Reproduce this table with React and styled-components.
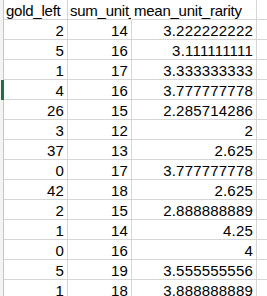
import styled, { createGlobalStyle } from "styled-components";

const GlobalStyle = createGlobalStyle`
  html, body {
    margin: 0;
    padding: 0;
    background: #fff;
  }
`

const Sheet = styled.div`
  width: 267px;
  height: 296px;
  overflow: hidden;
  background: #fff;
  font-family: "Liberation Sans Narrow", "Liberation Sans", Arial, sans-serif;
  font-size: 15px;
  color: #000;
`
const Row = styled.div`
  display: grid;
  grid-template-columns: 4px 64px 64px 125px 1fr;
  height: 20px;
`
const RowHead = styled.div`
  background: #f3f3f3;
  border-right: 1px solid ${p => (p.$active ? "#1e7145" : "#c6c6c6")};
  box-shadow: ${p => (p.$active ? "inset -2px 0 0 #1e7145" : "none")};
`
const Cell = styled.div`
  display: flex;
  align-items: flex-end;
  justify-content: ${p => (p.$text ? "flex-start" : "flex-end")};
  padding: 0 ${p => (p.$text ? "0" : "3px")} 1px ${p => (p.$text ? "2px" : "0")};
  border-right: 1px solid ${p => (p.$noRight ? "transparent" : "#d6d6d6")};
  border-bottom: 1px solid #d6d6d6;
  line-height: 15px;
  letter-spacing: ${p => (p.$text ? "-0.25px" : "0.2px")};
  white-space: nowrap;
  overflow: hidden;
`
const Empty = styled.div`
  border-bottom: 1px solid #d6d6d6;
`

const rows = [
  [2, 14, "3.222222222"],
  [5, 16, "3.111111111"],
  [1, 17, "3.333333333"],
  [4, 16, "3.777777778"],
  [26, 15, "2.285714286"],
  [3, 12, "2"],
  [37, 13, "2.625"],
  [0, 17, "3.777777778"],
  [42, 18, "2.625"],
  [2, 15, "2.888888889"],
  [1, 14, "4.25"],
  [0, 16, "4"],
  [5, 19, "3.555555556"],
  [1, 18, "3.888888889"],
];

const App = () => {
  return (
    <>
      <GlobalStyle />
      <Sheet>
        <Row>
          <RowHead />
          <Cell $text>gold_left</Cell>
          <Cell $text $noRight>sum_unit_</Cell>
          <Cell $text>mean_unit_rarity</Cell>
          <Empty />
        </Row>
        {rows.map((r, i) => (
          <Row key={i}>
            <RowHead $active={i === 3} />
            <Cell>{r[0]}</Cell>
            <Cell>{r[1]}</Cell>
            <Cell>{r[2]}</Cell>
            <Empty />
          </Row>
        ))}
      </Sheet>
    </>
  )
}

export default App;
